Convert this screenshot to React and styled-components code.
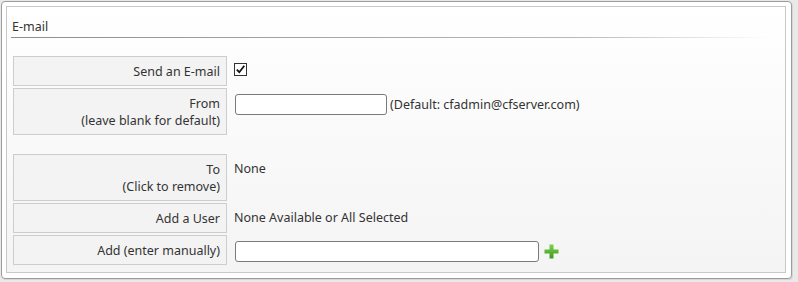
import React from "react";
import styled, { createGlobalStyle } from "styled-components";

const GlobalStyle = createGlobalStyle`
  html, body {
    margin: 0;
    padding: 0;
    background: #e9e9e9;
    font-family: "Noto Sans", "Open Sans", "Liberation Sans", sans-serif;
    font-size: 12.5px;
    color: #333;
  }
`;

const Page = styled.div`
  padding: 1px 6px 4px 1px;
`;

const Panel = styled.div`
  background: #fff;
  border: 1px solid #9c9c9c;
  border-radius: 4px;
  box-shadow: 1px 1px 0 rgba(0, 0, 0, 0.08);
  padding: 4px 5px 5px 4px;
`;

const Fieldset = styled.div`
  border: 1px solid #c8c8c8;
  background: linear-gradient(#ffffff, #f4f4f4);
  padding: 0 0 5px 4px;
  min-height: 258px;
  box-sizing: border-box;
`;

const Legend = styled.div`
  padding: 11px 0 2px 1px;
  line-height: 17px;
  margin-right: 18px;
  border-bottom: 1px solid transparent;
  border-image: linear-gradient(to right, #8e8e8e 0%, #b9b9b9 75%, rgba(255, 255, 255, 0) 100%) 1;
`;

const Table = styled.table`
  border-collapse: separate;
  border-spacing: 2px;
  margin: 16px 0 0 0;
  font-size: 12.5px;
  color: #333;
`;

const Label = styled.td`
  width: 201px;
  border: 1px solid #cdcdcd;
  background: #f3f3f3;
  padding: 6px 6px 5px 5px;
  line-height: 17px;
  text-align: right;
  vertical-align: top;
`;

const Value = styled.td`
  padding: 6px 5px 0 5px;
  line-height: 17px;
  vertical-align: top;
`;

const Spacer = styled.td`
  height: 15px;
  padding: 0;
`;

const Inline = styled.div`
  display: flex;
  align-items: center;
  gap: ${(p) => p.$gap || 3}px;
  padding-left: 1px;
`;

const TextInput = styled.input`
  box-sizing: border-box;
  width: ${(p) => p.$w}px;
  height: 21px;
  margin: 0;
  border: 1px solid #7a7a7a;
  border-radius: 3px;
  background: #fff;
  font: inherit;
  padding: 0 4px;
`;

const CheckBox = styled.span`
  display: block;
  width: 13px;
  height: 13px;
  box-sizing: border-box;
  border: 1px solid #333;
  background: #fff;
  margin: 1px 0 0 0;
  & svg {
    display: block;
  }
`;

const Check = () => (
  <CheckBox>
    <svg width="11" height="11" viewBox="0 0 11 11">
      <path d="M1.8 5.6 L4.3 8.2 L9.3 1.8" fill="none" stroke="#111" strokeWidth="1.8" />
    </svg>
  </CheckBox>
);

const PlusIcon = () => (
  <svg width="15" height="15" viewBox="0 0 15 15">
    <defs>
      <linearGradient id="plusg" x1="0" y1="0" x2="0" y2="1">
        <stop offset="0" stopColor="#7fd04d" />
        <stop offset="1" stopColor="#3a9a1c" />
      </linearGradient>
    </defs>
    <path d="M5.5 0.5 H9.5 V5.5 H14.5 V9.5 H9.5 V14.5 H5.5 V9.5 H0.5 V5.5 H5.5 Z" fill="url(#plusg)" />
  </svg>
);

const App = () => {
  return (
    <Page>
      <GlobalStyle />
      <Panel>
        <Fieldset>
          <Legend>E-mail</Legend>
          <Table>
            <tbody>
              <tr>
                <Label>Send an E-mail</Label>
                <Value>
                  <Check />
                </Value>
              </tr>
              <tr>
                <Label>
                  From
                  <br />
                  (leave blank for default)
                </Label>
                <Value>
                  <Inline>
                    <TextInput $w={152} />
                    <span>(Default: cfadmin@cfserver.com)</span>
                  </Inline>
                </Value>
              </tr>
              <tr>
                <Spacer colSpan={2} />
              </tr>
              <tr>
                <Label>
                  To
                  <br />
                  (Click to remove)
                </Label>
                <Value>None</Value>
              </tr>
              <tr>
                <Label>Add a User</Label>
                <Value>None Available or All Selected</Value>
              </tr>
              <tr>
                <Label>Add (enter manually)</Label>
                <Value>
                  <Inline $gap={5}>
                    <TextInput $w={304} />
                    <PlusIcon />
                  </Inline>
                </Value>
              </tr>
            </tbody>
          </Table>
        </Fieldset>
      </Panel>
    </Page>
  );
};

export default App;
